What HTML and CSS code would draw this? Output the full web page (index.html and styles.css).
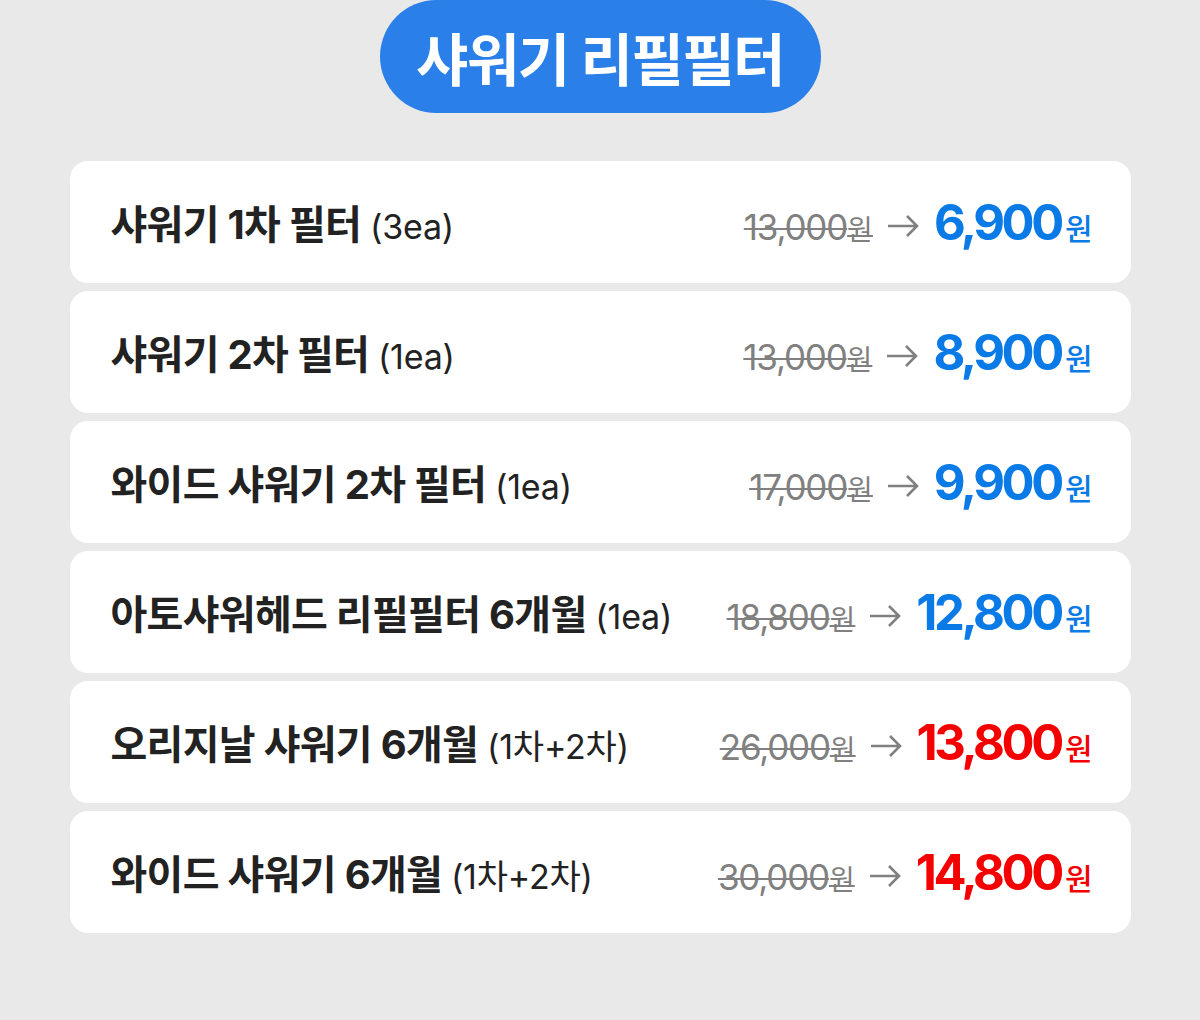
FILE: index.html
```html
<!DOCTYPE html>
<html lang="ko">
<head>
<meta charset="utf-8">
<link rel="stylesheet" href="styles.css">
</head>
<body>
<div class="page">
  <div class="title-wrap"><h1 class="title">샤워기 리필필터</h1></div>
  <ul class="list">
    <li class="card">
      <div class="name">샤워기 1차 필터 <span class="qty">(3ea)</span></div>
      <div class="price">
        <span class="old">13,000<span class="won">원</span></span>
        <svg class="arrow" viewBox="0 0 32 22"><path d="M1 11H30M20 1L30 11L20 21" fill="none" stroke="#808080" stroke-width="2.6"/></svg>
        <span class="new blue">6,900<span class="won">원</span></span>
      </div>
    </li>
    <li class="card">
      <div class="name">샤워기 2차 필터 <span class="qty">(1ea)</span></div>
      <div class="price">
        <span class="old">13,000<span class="won">원</span></span>
        <svg class="arrow" viewBox="0 0 32 22"><path d="M1 11H30M20 1L30 11L20 21" fill="none" stroke="#808080" stroke-width="2.6"/></svg>
        <span class="new blue">8,900<span class="won">원</span></span>
      </div>
    </li>
    <li class="card">
      <div class="name">와이드 샤워기 2차 필터 <span class="qty">(1ea)</span></div>
      <div class="price">
        <span class="old">17,000<span class="won">원</span></span>
        <svg class="arrow" viewBox="0 0 32 22"><path d="M1 11H30M20 1L30 11L20 21" fill="none" stroke="#808080" stroke-width="2.6"/></svg>
        <span class="new blue">9,900<span class="won">원</span></span>
      </div>
    </li>
    <li class="card">
      <div class="name">아토샤워헤드 리필필터 6개월 <span class="qty">(1ea)</span></div>
      <div class="price">
        <span class="old">18,800<span class="won">원</span></span>
        <svg class="arrow" viewBox="0 0 32 22"><path d="M1 11H30M20 1L30 11L20 21" fill="none" stroke="#808080" stroke-width="2.6"/></svg>
        <span class="new blue">12,800<span class="won">원</span></span>
      </div>
    </li>
    <li class="card">
      <div class="name">오리지날 샤워기 6개월 <span class="qty">(1차+2차)</span></div>
      <div class="price">
        <span class="old">26,000<span class="won">원</span></span>
        <svg class="arrow" viewBox="0 0 32 22"><path d="M1 11H30M20 1L30 11L20 21" fill="none" stroke="#808080" stroke-width="2.6"/></svg>
        <span class="new red">13,800<span class="won">원</span></span>
      </div>
    </li>
    <li class="card">
      <div class="name">와이드 샤워기 6개월 <span class="qty">(1차+2차)</span></div>
      <div class="price">
        <span class="old">30,000<span class="won">원</span></span>
        <svg class="arrow" viewBox="0 0 32 22"><path d="M1 11H30M20 1L30 11L20 21" fill="none" stroke="#808080" stroke-width="2.6"/></svg>
        <span class="new red">14,800<span class="won">원</span></span>
      </div>
    </li>
  </ul>
</div>
</body>
</html>
```
FILE: styles.css
```css
* { box-sizing: border-box; }
html, body { margin: 0; padding: 0; }
body {
  background: #e9e9e9;
  font-family: Inter, "Noto Sans CJK KR", sans-serif;
  width: 1200px;
  height: 1020px;
  overflow: hidden;
}
.page {
  display: flex;
  flex-direction: column;
  align-items: center;
}
.title-wrap {
  display: flex;
  justify-content: center;
}
.title {
  margin: 0;
  width: 441px;
  height: 113px;
  border-radius: 57px;
  background: #2a80e8;
  color: #fff;
  font-size: 57px;
  font-weight: 700;
  letter-spacing: -1.6px;
  display: flex;
  align-items: center;
  justify-content: center;
  padding-bottom: 2px;
}
.list {
  list-style: none;
  margin: 48px 0 0;
  padding: 0;
  width: 1061px;
  display: flex;
  flex-direction: column;
  gap: 8px;
}
.card {
  background: #fff;
  border-radius: 18px;
  height: 122px;
  padding: 0 38px 0 41px;
  display: flex;
  align-items: center;
  justify-content: space-between;
}
.name {
  font-size: 40px;
  font-weight: 700;
  color: #222;
  letter-spacing: -0.7px;
  white-space: nowrap;
}
.qty {
  font-size: 34px;
  font-weight: 400;
  letter-spacing: -0.2px;
}
.price {
  display: flex;
  align-items: baseline;
  white-space: nowrap;
}
.old {
  font-size: 35px;
  color: #808080;
  text-decoration: line-through;
  text-decoration-thickness: 2px;
  letter-spacing: -1.2px;
}
.old .won {
  font-size: 28px;
  letter-spacing: 0;
}
.arrow {
  width: 32px;
  height: 22px;
  margin: 0 15px 0 14px;
  align-self: center;
  position: relative;
  top: 4px;
}
.new {
  font-size: 49px;
  font-weight: 700;
  letter-spacing: -3.4px;
}
.new .won {
  font-size: 30px;
  font-weight: 500;
  letter-spacing: 0;
  margin-left: 4px;
}
.blue { color: #0a7ae6; }
.red { color: #f40000; }
```
